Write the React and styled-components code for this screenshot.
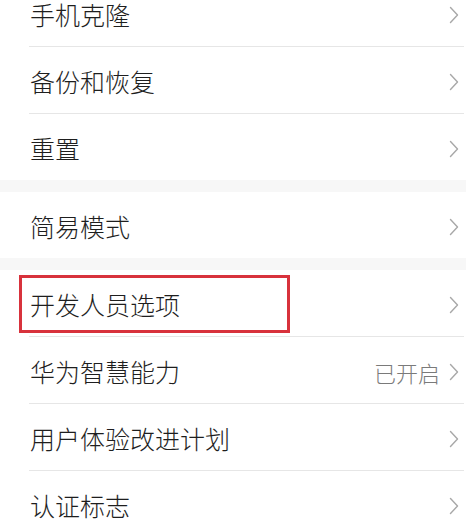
import React from 'react'
import styled, { createGlobalStyle } from 'styled-components'

const GlobalStyle = createGlobalStyle`
  html, body {
    margin: 0;
    padding: 0;
    background: #ffffff;
    font-family: "Noto Sans CJK SC", "Noto Sans", sans-serif;
    overflow: hidden;
  }
`

const groups = [
  [
    { label: '手机克隆' },
    { label: '备份和恢复' },
    { label: '重置' },
  ],
  [{ label: '简易模式' }],
  [
    { label: '开发人员选项', marked: true },
    { label: '华为智慧能力', value: '已开启' },
    { label: '用户体验改进计划' },
    { label: '认证标志' },
  ],
]

const Chevron = () => (
  <ChevronIcon viewBox="0 0 10 18" aria-hidden="true">
    <path d="M1.5 1.5 L8.5 9 L1.5 16.5" fill="none" stroke="#a8a8a8" strokeWidth="1.4" strokeLinecap="round" strokeLinejoin="round" />
  </ChevronIcon>
)

const App = () => {
  return (
    <>
      <GlobalStyle />
      <Screen>
        <List>
          {groups.map((items, gi) => (
            <React.Fragment key={gi}>
              {gi > 0 && <Gap />}
              <Group>
                {items.map((item) => (
                  <Row key={item.label}>
                    <Label>{item.label}</Label>
                    {item.value && <Value>{item.value}</Value>}
                    <Chevron />
                    {item.marked && <Highlight />}
                  </Row>
                ))}
              </Group>
            </React.Fragment>
          ))}
        </List>
      </Screen>
    </>
  )
}

export default App

const Screen = styled.div`
  width: 466px;
  height: 531px;
  overflow: hidden;
  background: #ffffff;
`

const List = styled.div`
  display: flex;
  flex-direction: column;
  margin-top: -20px;
`

const Gap = styled.div`
  height: 12px;
  background: #f7f7f7;
`

const Group = styled.div`
  display: flex;
  flex-direction: column;
  background: #ffffff;
`

const Row = styled.div`
  position: relative;
  display: flex;
  align-items: center;
  height: 66px;
  padding: 3px 7px 0 30px;
  box-sizing: border-box;

  & + & {
    margin-top: 1px;
  }

  & + &::before {
    content: '';
    position: absolute;
    left: 29px;
    right: 2px;
    top: -1px;
    height: 1px;
    background: #e6e6e6;
  }
`

const Label = styled.span`
  flex: 1;
  font-size: 25px;
  font-weight: 300;
  line-height: 1;
  color: #1e1e1e;
`

const Value = styled.span`
  font-size: 22px;
  font-weight: 300;
  line-height: 1;
  color: #7a7a7a;
  margin-right: 9px;
`

const ChevronIcon = styled.svg`
  width: 10px;
  height: 18px;
  flex-shrink: 0;
`

const Highlight = styled.div`
  position: absolute;
  left: 19px;
  top: 5px;
  width: 271px;
  height: 58px;
  box-sizing: border-box;
  border: 3px solid #d8323c;
  pointer-events: none;
`
